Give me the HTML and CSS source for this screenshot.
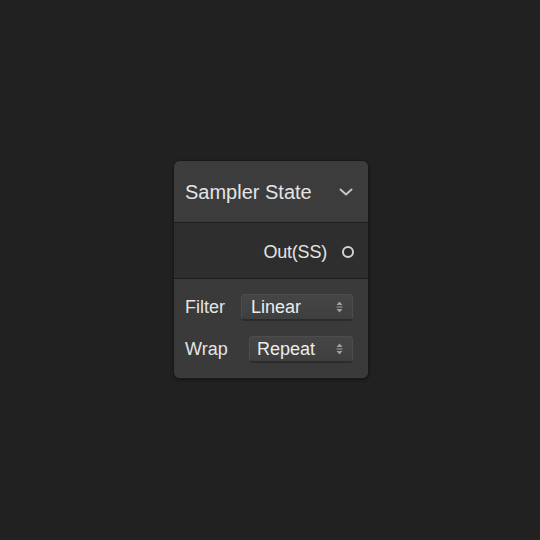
FILE: index.html
```html
<!DOCTYPE html>
<html>
<head>
<meta charset="utf-8">
<link rel="stylesheet" href="styles.css">
</head>
<body>
<div class="node">
  <div class="header">
    <span class="title">Sampler State</span>
    <svg class="chevron" width="14" height="8" viewBox="0 0 14 8"><path d="M1.5 1.5 L7 6.5 L12.5 1.5" fill="none" stroke="#c4c4c4" stroke-width="2" stroke-linecap="round" stroke-linejoin="round"/></svg>
  </div>
  <div class="outputs">
    <span class="port-label">Out(SS)</span>
    <span class="port"></span>
  </div>
  <div class="props">
    <div class="prop">
      <span class="prop-label">Filter</span>
      <div class="select select-filter">
        <span class="select-text">Linear</span>
        <svg class="arrows" width="7" height="12" viewBox="0 0 7 12"><path d="M3.5 0.5 L6.5 4 L0.5 4 Z M3.5 11.5 L6.5 8 L0.5 8 Z" fill="#a0a0a0"/><rect x="0.5" y="5.5" width="6" height="1" fill="#a0a0a0"/></svg>
      </div>
    </div>
    <div class="prop">
      <span class="prop-label">Wrap</span>
      <div class="select select-wrap">
        <span class="select-text">Repeat</span>
        <svg class="arrows" width="7" height="12" viewBox="0 0 7 12"><path d="M3.5 0.5 L6.5 4 L0.5 4 Z M3.5 11.5 L6.5 8 L0.5 8 Z" fill="#a0a0a0"/><rect x="0.5" y="5.5" width="6" height="1" fill="#a0a0a0"/></svg>
      </div>
    </div>
  </div>
</div>
</body>
</html>
```
FILE: styles.css
```css
html, body {
  margin: 0;
  padding: 0;
  background: #212121;
}
body {
  width: 540px;
  height: 540px;
  overflow: hidden;
  font-family: "Liberation Sans", Arial, sans-serif;
  color: #e4e4e4;
}
.node {
  margin-left: 173px;
  margin-top: 160px;
  width: 194px;
  border: 1px solid #1a1a1a;
  border-radius: 7px;
  overflow: hidden;
  background: #3a3a3a;
  box-shadow: 0 1px 3px rgba(0,0,0,0.4);
}
.header {
  height: 61px;
  background: #3c3c3c;
  display: flex;
  align-items: center;
  justify-content: space-between;
  padding: 0 15px 0 11px;
  border-bottom: 1px solid #1c1c1c;
}
.title {
  font-size: 20px;
  line-height: 20px;
}
.chevron {
  display: block;
  margin-top: 1px;
}
.outputs {
  height: 55px;
  background: #2e2e2e;
  border-bottom: 1px solid #1c1c1c;
  display: flex;
  align-items: center;
  justify-content: flex-end;
  padding-right: 14px;
}
.port-label {
  font-size: 18px;
  letter-spacing: -0.2px;
  margin-right: 15px;
  margin-top: 3px;
}
.port {
  width: 8px;
  height: 8px;
  border: 2px solid #d2d2d2;
  border-radius: 50%;
  background: #2a2a2a;
  margin-top: 3px;
}
.props {
  height: 99px;
  box-sizing: border-box;
  padding: 15px 15px 15px 11px;
  display: flex;
  flex-direction: column;
  gap: 16px;
  background: #3a3a3a;
}
.prop {
  display: flex;
  align-items: center;
  justify-content: space-between;
  height: 26px;
}
.prop-label {
  font-size: 18px;
}
.select {
  height: 26px;
  box-sizing: border-box;
  border: 1px solid #4d4d4d;
  border-bottom-color: #2b2b2b;
  border-radius: 4px;
  background: linear-gradient(#454545, #3f3f3f);
  box-shadow: 0 1px 0 rgba(0,0,0,0.25);
  display: flex;
  align-items: center;
  justify-content: space-between;
  padding: 0 9px 0 9px;
}
.select-filter {
  width: 112px;
}
.select-wrap {
  width: 104px;
  padding-left: 7px;
}
.select-text {
  font-size: 18px;
  color: #ececec;
}
.arrows {
  display: block;
}
```
